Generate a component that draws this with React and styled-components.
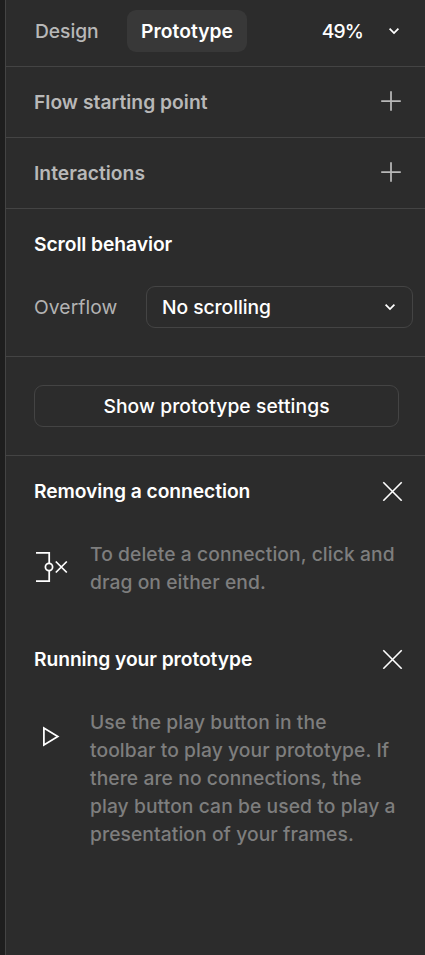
import styled, { createGlobalStyle } from "styled-components";

const GlobalStyle = createGlobalStyle`
  * {
    box-sizing: border-box;
  }
  body {
    margin: 0;
    background: #2c2c2c;
  }
  button {
    font: inherit;
    letter-spacing: inherit;
    color: inherit;
    background: none;
    border: none;
    padding: 0;
  }
`;

const Page = styled.div`
  height: 955px;
  padding-left: 5px;
  overflow: hidden;
  background: #1e1e1e;
`;

const Panel = styled.aside`
  height: 100%;
  border-left: 1px solid #444444;
  background: #2c2c2c;
  color: #ffffff;
  font-family: Inter, "Liberation Sans", sans-serif;
  font-size: 19.25px;
  font-weight: 450;
  line-height: 28px;
  letter-spacing: 0.08px;
`;

const Header = styled.header`
  display: flex;
  align-items: center;
  height: 67px;
  padding: 0 25px 5px 15px;
  border-bottom: 1px solid #444444;
`;

const Tab = styled.button`
  height: 42px;
  padding: 0 14px;
  margin-right: 14.5px;
  border-radius: 9px;
  color: ${props => (props.$active ? "#ffffff" : "#b8b8b8")};
  background: ${props => (props.$active ? "#383838" : "transparent")};
  font-weight: ${props => (props.$active ? 600 : 450)};
  letter-spacing: ${props => (props.$active ? "0.03px" : "-0.06px")};
`;

const Zoom = styled.div`
  display: flex;
  align-items: center;
  gap: 25px;
  margin-left: auto;
  letter-spacing: -0.9px;
`;

const Row = styled.section`
  display: flex;
  align-items: center;
  justify-content: space-between;
  height: 71px;
  padding: 0 24px 0 28px;
  border-bottom: 1px solid #444444;
  color: #b8b8b8;
`;

const Title = styled.h2`
  margin: 0;
  font-size: inherit;
  font-weight: 600;
  letter-spacing: ${props => (props.$muted ? "0.02px" : "-0.07px")};
`;

const ScrollSection = styled.section`
  height: 148px;
  padding: 21px 12px 0 28px;
  border-bottom: 1px solid #444444;
`;

const Field = styled.div`
  display: flex;
  align-items: center;
  justify-content: space-between;
  margin-top: 28px;
`;

const FieldLabel = styled.span`
  color: #b3b3b3;
  font-weight: 400;
`;

const Select = styled.button`
  display: flex;
  align-items: center;
  justify-content: space-between;
  width: 267px;
  height: 42px;
  padding: 0 16px 0 15px;
  border: 1px solid #444444;
  border-radius: 9px;
  letter-spacing: -0.05px;
`;

const SettingsSection = styled.section`
  height: 99px;
  padding: 28px 26px 0 28px;
  border-bottom: 1px solid #444444;
`;

const SettingsButton = styled.button`
  width: 100%;
  height: 42px;
  border: 1px solid #444444;
  border-radius: 9px;
`;

const Tip = styled.section`
  height: 168px;
`;

const TipHeader = styled.div`
  display: flex;
  align-items: center;
  justify-content: space-between;
  height: 70px;
  padding: 0 22px 0 28px;
`;

const TipBody = styled.div`
  display: flex;
  padding: 14px 0 0 28px;
`;

const TipIcon = styled.div`
  display: flex;
  align-items: center;
  width: 56px;
  height: 56px;
`;

const TipText = styled.p`
  margin: 0;
  color: #7e7e7e;
  white-space: pre-line;
`;

const Icon = styled.svg`
  display: block;
  flex: none;
  fill: none;
  stroke: currentColor;
`;

const Chevron = () => (
  <Icon width="12" height="8" viewBox="0 0 12 8" strokeWidth="1.75">
    <path d="M1.6 1.6 6 6l4.4-4.4" />
  </Icon>
);

const Plus = () => (
  <Icon width="20" height="22" viewBox="0 0 20 22" strokeWidth="1.75">
    <path d="M10 .2v19.6M.2 10h19.6" />
  </Icon>
);

const Close = () => (
  <Icon width="21" height="20" viewBox="0 0 21 20" strokeWidth="1.6">
    <path d="m1.3 1.3 18.4 18.4M19.7 1.3 1.3 19.7" />
  </Icon>
);

const RemoveConnection = () => (
  <Icon width="35" height="32" viewBox="0 0 35 32" strokeWidth="1.75">
    <path d="M2 .9h13.2V11.4M2 29.1h13.2V18.6" />
    <circle cx="15" cy="15" r="3.6" />
    <path d="m21.8 9.5 11 11M32.8 9.5l-11 11" />
  </Icon>
);

const Play = () => (
  <Icon width="35" height="32" viewBox="0 0 35 32" strokeWidth="1.75">
    <path d="M9.9 8v17L23.8 16.5z" />
  </Icon>
);

const tips = [
  {
    title: "Removing a connection",
    icon: <RemoveConnection />,
    text: "To delete a connection, click and\ndrag on either end.",
  },
  {
    title: "Running your prototype",
    icon: <Play />,
    text:
      "Use the play button in the\ntoolbar to play your prototype. If\nthere are no connections, the\nplay button can be used to play a\npresentation of your frames.",
  },
];

const App = () => {
  return (
    <Page>
      <GlobalStyle />
      <Panel>
        <Header>
          <Tab>Design</Tab>
          <Tab $active>Prototype</Tab>
          <Zoom>
            <span>49%</span>
            <Chevron />
          </Zoom>
        </Header>
        {["Flow starting point", "Interactions"].map(name => (
          <Row key={name}>
            <Title $muted>{name}</Title>
            <Plus />
          </Row>
        ))}
        <ScrollSection>
          <Title>Scroll behavior</Title>
          <Field>
            <FieldLabel>Overflow</FieldLabel>
            <Select>
              No scrolling
              <Chevron />
            </Select>
          </Field>
        </ScrollSection>
        <SettingsSection>
          <SettingsButton>Show prototype settings</SettingsButton>
        </SettingsSection>
        {tips.map(tip => (
          <Tip key={tip.title}>
            <TipHeader>
              <Title>{tip.title}</Title>
              <Close />
            </TipHeader>
            <TipBody>
              <TipIcon>{tip.icon}</TipIcon>
              <TipText>{tip.text}</TipText>
            </TipBody>
          </Tip>
        ))}
      </Panel>
    </Page>
  );
};

export default App;
